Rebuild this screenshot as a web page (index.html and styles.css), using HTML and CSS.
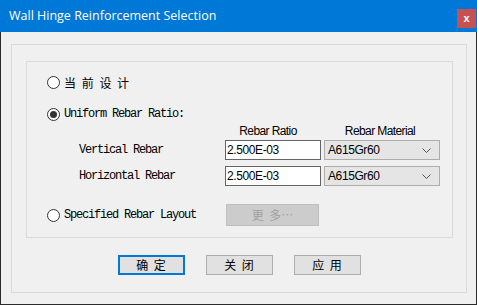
FILE: index.html
```html
<!DOCTYPE html>
<html lang="zh">
<head>
    <meta charset="UTF-8">
    <title>Wall Hinge Reinforcement Selection</title>
    <link rel="stylesheet" href="styles.css">
</head>
<body>

    <div class="window">
        <div class="titlebar">
            <span class="title">Wall Hinge Reinforcement Selection</span>
            <span class="close-btn">x</span>
        </div>

        <div class="outer-group">
            <div class="inner-group">

                <div class="radio-row first">
                    <span class="radio"></span>
                    <span class="cjk">当 前 设 计</span>
                </div>

                <div class="radio-row second">
                    <span class="radio checked"></span>
                    <span class="mono">Uniform Rebar Ratio:</span>
                </div>

                <div class="header-row">
                    <span class="col-ratio">Rebar Ratio</span>
                    <span class="col-material">Rebar Material</span>
                </div>

                <div class="rebar-row">
                    <span class="rebar-label mono">Vertical Rebar</span>
                    <span class="text-box">2.500E-03</span>
                    <span class="combo">A615Gr60
                        <svg width="9" height="5" viewBox="0 0 9 5"><polyline points="0.5,0.5 4.5,4.5 8.5,0.5" fill="none" stroke="#555" stroke-width="1"/></svg>
                    </span>
                </div>

                <div class="rebar-row second-rebar">
                    <span class="rebar-label mono">Horizontal Rebar</span>
                    <span class="text-box">2.500E-03</span>
                    <span class="combo">A615Gr60
                        <svg width="9" height="5" viewBox="0 0 9 5"><polyline points="0.5,0.5 4.5,4.5 8.5,0.5" fill="none" stroke="#555" stroke-width="1"/></svg>
                    </span>
                </div>

                <div class="layout-row">
                    <div class="layout-option">
                        <span class="radio"></span>
                        <span class="mono">Specified Rebar Layout</span>
                    </div>
                    <span class="more-btn">更 多…</span>
                </div>

            </div>

            <div class="dialog-buttons">
                <span class="dlg-btn default">确 定</span>
                <span class="dlg-btn">关 闭</span>
                <span class="dlg-btn">应 用</span>
            </div>
        </div>
    </div>

</body>
</html>
```

FILE: styles.css
```css
body {
    margin: 0;
    padding: 0;
    background: #f0f0f0;
}

.window {
    width: 477px;
    height: 305px;
    box-sizing: border-box;
    background: #f0f0f0;
    border: 1px solid #2b2b2b;
    border-top: none;
}

.titlebar {
    height: 32px;
    margin: 0 -1px;
    background: #0078d7;
    display: flex;
    justify-content: space-between;
    align-items: flex-start;
}

.title {
    color: white;
    font-family: "Open Sans", sans-serif;
    font-size: 12.5px;
    line-height: 32px;
    padding-left: 9px;
}

.close-btn {
    width: 19px;
    height: 19px;
    margin-top: 9px;
    margin-right: 1px;
    background: #c75050;
    color: white;
    font-family: "Liberation Sans", sans-serif;
    font-weight: bold;
    font-size: 11px;
    line-height: 18px;
    text-align: center;
}

.outer-group {
    width: 456px;
    height: 249px;
    box-sizing: border-box;
    margin: 12px 0 0 10px;
    border: 1px solid #dadada;
    padding: 16px 0 0 14px;
}

.inner-group {
    width: 427px;
    height: 177px;
    box-sizing: border-box;
    border: 1px solid #dadada;
    padding-left: 20px;
}

.mono {
    font-family: "Liberation Mono", monospace;
    font-size: 12px;
    letter-spacing: -1.2px;
    color: #000;
}

.cjk {
    font-family: "Noto Sans CJK SC", sans-serif;
    font-size: 12px;
    color: #000;
    word-spacing: 3px;
}

.radio-row {
    display: flex;
    align-items: center;
    height: 20px;
    gap: 4px;
}

.radio-row.first {
    margin-top: 10px;
}

.radio-row.second {
    margin-top: 12px;
}

.radio {
    width: 13px;
    height: 13px;
    box-sizing: border-box;
    border: 1px solid #333;
    border-radius: 50%;
    background: white;
    display: flex;
    align-items: center;
    justify-content: center;
    flex-shrink: 0;
}

.radio.checked::after {
    content: "";
    width: 7px;
    height: 7px;
    border-radius: 50%;
    background: #333;
}

.header-row {
    display: flex;
    height: 14px;
    padding-left: 175px;
    font-family: "Liberation Sans", sans-serif;
    font-size: 12px;
    letter-spacing: -0.6px;
    line-height: 14px;
    color: #000;
}

.col-ratio {
    width: 92px;
    text-align: center;
}

.col-material {
    width: 132px;
    text-align: center;
}

.rebar-row {
    display: flex;
    align-items: center;
    height: 20px;
    margin-top: 2px;
    padding-left: 32px;
}

.rebar-row.second-rebar {
    margin-top: 6px;
}

.rebar-label {
    width: 146px;
}

.text-box {
    width: 96px;
    height: 20px;
    box-sizing: border-box;
    border: 1px solid #646464;
    background: white;
    font-family: "Liberation Sans", sans-serif;
    font-size: 12px;
    letter-spacing: -0.4px;
    line-height: 18px;
    padding-left: 1px;
}

.combo {
    width: 116px;
    height: 20px;
    box-sizing: border-box;
    margin-left: 3px;
    border: 1px solid #adadad;
    background: #e5e5e5;
    font-family: "Liberation Sans", sans-serif;
    font-size: 12px;
    letter-spacing: -0.4px;
    line-height: 18px;
    padding: 0 8px 0 3px;
    display: flex;
    justify-content: space-between;
    align-items: center;
}

.layout-row {
    display: flex;
    align-items: center;
    height: 22px;
    margin-top: 18px;
}

.layout-option {
    width: 179px;
    display: flex;
    align-items: center;
    gap: 4px;
}

.more-btn {
    width: 93px;
    height: 22px;
    box-sizing: border-box;
    border: 1px solid #bfbfbf;
    background: #cccccc;
    color: #a0a0a0;
    font-family: "Noto Sans CJK SC", sans-serif;
    font-size: 12px;
    word-spacing: 3px;
    line-height: 20px;
    text-align: center;
}

.dialog-buttons {
    display: flex;
    justify-content: center;
    gap: 21px;
    margin: 17px 0 0 -14px;
}

.dlg-btn {
    width: 67px;
    height: 20px;
    box-sizing: border-box;
    border: 1px solid #adadad;
    background: #e1e1e1;
    font-family: "Noto Sans CJK SC", sans-serif;
    font-size: 12px;
    word-spacing: 3px;
    line-height: 18px;
    text-align: center;
    color: #000;
}

.dlg-btn.default {
    border: 2px solid #0078d7;
    line-height: 16px;
}
```
